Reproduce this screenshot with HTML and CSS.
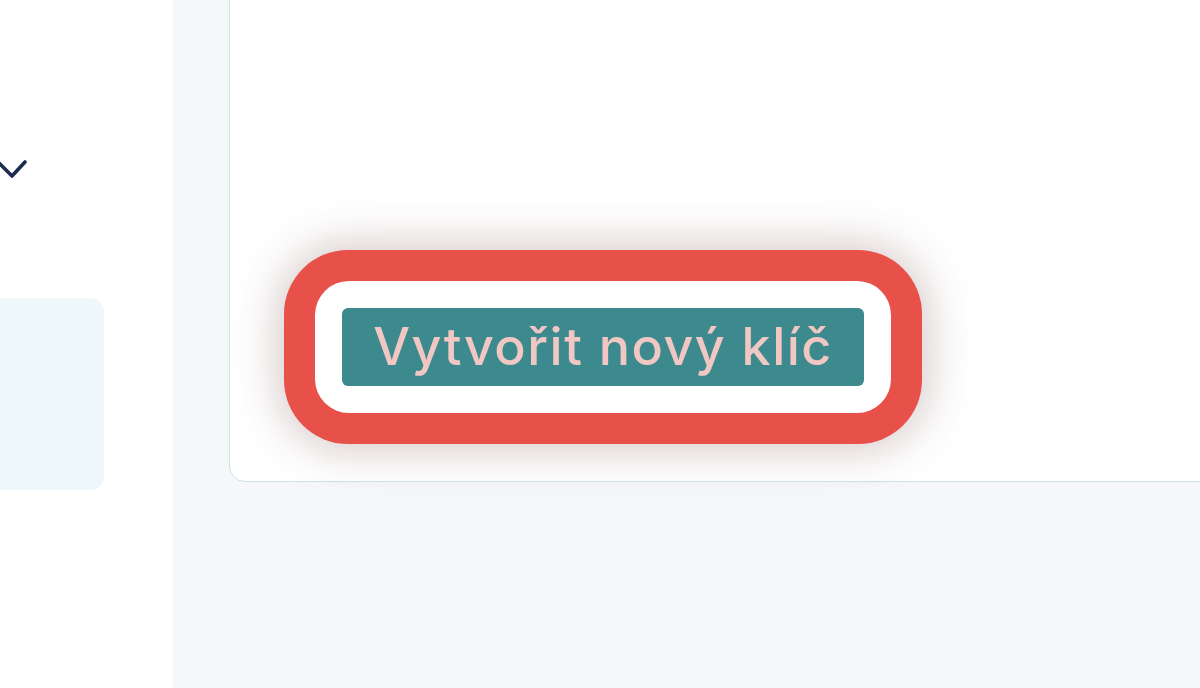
FILE: index.html
```html
<!DOCTYPE html>
<html lang="cs">
<head>
<meta charset="utf-8">
<title>Klíče</title>
<link rel="stylesheet" href="styles.css">
</head>
<body>
<div class="app">
  <aside class="sidebar">
    <div class="nav-row">
      <svg class="chevron" width="34" height="26" viewBox="0 0 34 26" aria-hidden="true">
        <polyline points="3,7 16,20 29,6" fill="none" stroke="#1c2b4f" stroke-width="3.6" stroke-linecap="round" stroke-linejoin="round"/>
      </svg>
    </div>
    <div class="nav-box"></div>
  </aside>
  <main class="main">
    <section class="card">
      <div class="focus-ring">
        <div class="focus-gap">
          <button class="btn-create" type="button">Vytvořit nový klíč</button>
        </div>
      </div>
    </section>
  </main>
</div>
</body>
</html>
```
FILE: styles.css
```css
html, body {
  margin: 0;
  padding: 0;
  width: 1200px;
  height: 688px;
  overflow: hidden;
  background: #f5f7f9;
  font-family: Inter, "Noto Sans", "Liberation Sans", sans-serif;
}

.app {
  display: flex;
  height: 688px;
}

.sidebar {
  width: 173px;
  flex-shrink: 0;
  background: #ffffff;
  padding-top: 156px;
  box-sizing: border-box;
}

.nav-row {
  display: flex;
  margin-left: -4px;
  height: 26px;
}

.chevron {
  display: block;
}

.nav-box {
  margin-top: 116px;
  margin-left: -40px;
  width: 144px;
  height: 192px;
  border-radius: 14px;
  background: #eef7f9;
}

.main {
  flex: 1;
  min-width: 0;
  background: #f5f7f9;
  padding-left: 56px;
  overflow: hidden;
}

.card {
  margin-top: -40px;
  width: 1100px;
  height: 522px;
  box-sizing: border-box;
  border: 1.5px solid #cde2e6;
  border-radius: 16px;
  background: #ffffff;
  padding-top: 289px;
  padding-left: 54px;
}

.focus-ring {
  display: inline-block;
  padding: 31px;
  border-radius: 64px;
  background: #e8514a;
  box-shadow: 0 0 44px 6px rgba(110, 60, 60, 0.28);
}

.focus-gap {
  padding: 27px;
  border-radius: 34px;
  background: #ffffff;
}

.btn-create {
  display: block;
  width: 522px;
  height: 78px;
  padding: 0;
  border: none;
  border-radius: 6px;
  background: #3d8a8e;
  color: #f1c7c3;
  font-family: Inter, "Noto Sans", "Liberation Sans", sans-serif;
  font-size: 52px;
  font-weight: 500;
  line-height: 78px;
  letter-spacing: 1.5px;
  text-align: center;
  cursor: pointer;
}
```
